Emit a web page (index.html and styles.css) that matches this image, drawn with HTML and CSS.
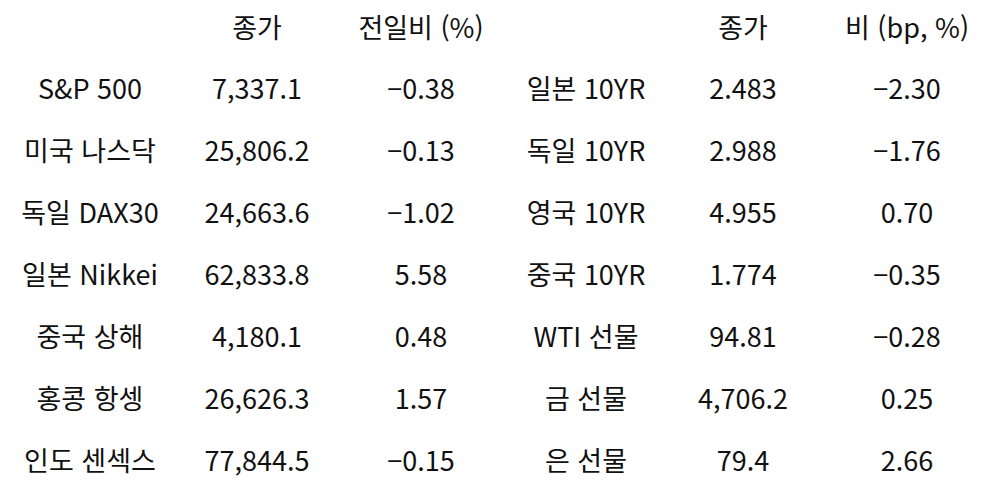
FILE: index.html
```html
<!DOCTYPE html>
<html lang="ko">
<head>
<meta charset="utf-8">
<link rel="stylesheet" href="styles.css">
</head>
<body>
<div class="table">
  <div class="cell head"></div><div class="cell head">종가</div><div class="cell head">전일비 (%)</div><div class="cell head"></div><div class="cell head">종가</div><div class="cell head">비 (bp, %)</div>

  <div class="cell">S&amp;P 500</div><div class="cell">7,337.1</div><div class="cell">−0.38</div><div class="cell">일본 10YR</div><div class="cell">2.483</div><div class="cell">−2.30</div>
  <div class="cell">미국 나스닥</div><div class="cell">25,806.2</div><div class="cell">−0.13</div><div class="cell">독일 10YR</div><div class="cell">2.988</div><div class="cell">−1.76</div>
  <div class="cell">독일 DAX30</div><div class="cell">24,663.6</div><div class="cell">−1.02</div><div class="cell">영국 10YR</div><div class="cell">4.955</div><div class="cell">0.70</div>
  <div class="cell">일본 Nikkei</div><div class="cell">62,833.8</div><div class="cell">5.58</div><div class="cell">중국 10YR</div><div class="cell">1.774</div><div class="cell">−0.35</div>
  <div class="cell">중국 상해</div><div class="cell">4,180.1</div><div class="cell">0.48</div><div class="cell">WTI 선물</div><div class="cell">94.81</div><div class="cell">−0.28</div>
  <div class="cell">홍콩 항셍</div><div class="cell">26,626.3</div><div class="cell">1.57</div><div class="cell">금 선물</div><div class="cell">4,706.2</div><div class="cell">0.25</div>
  <div class="cell">인도 센섹스</div><div class="cell">77,844.5</div><div class="cell">−0.15</div><div class="cell">은 선물</div><div class="cell">79.4</div><div class="cell">2.66</div>
</div>
</body>
</html>
```

FILE: styles.css
```css
html, body {
  margin: 0;
  padding: 0;
  background: #ffffff;
}
body {
  width: 992px;
  height: 488px;
  overflow: hidden;
  font-family: "Noto Sans CJK KR", "Noto Sans", sans-serif;
  font-weight: 400;
  font-size: 27px;
  color: #111111;
}
.table {
  display: grid;
  grid-template-columns: 180px 154px 174px 156px 158px 170px;
  grid-template-rows: 56px repeat(7, 62px);
}
.cell {
  display: flex;
  align-items: center;
  justify-content: center;
  white-space: nowrap;
  line-height: 1;
}
.head {
  padding-bottom: 4px;
}
```
